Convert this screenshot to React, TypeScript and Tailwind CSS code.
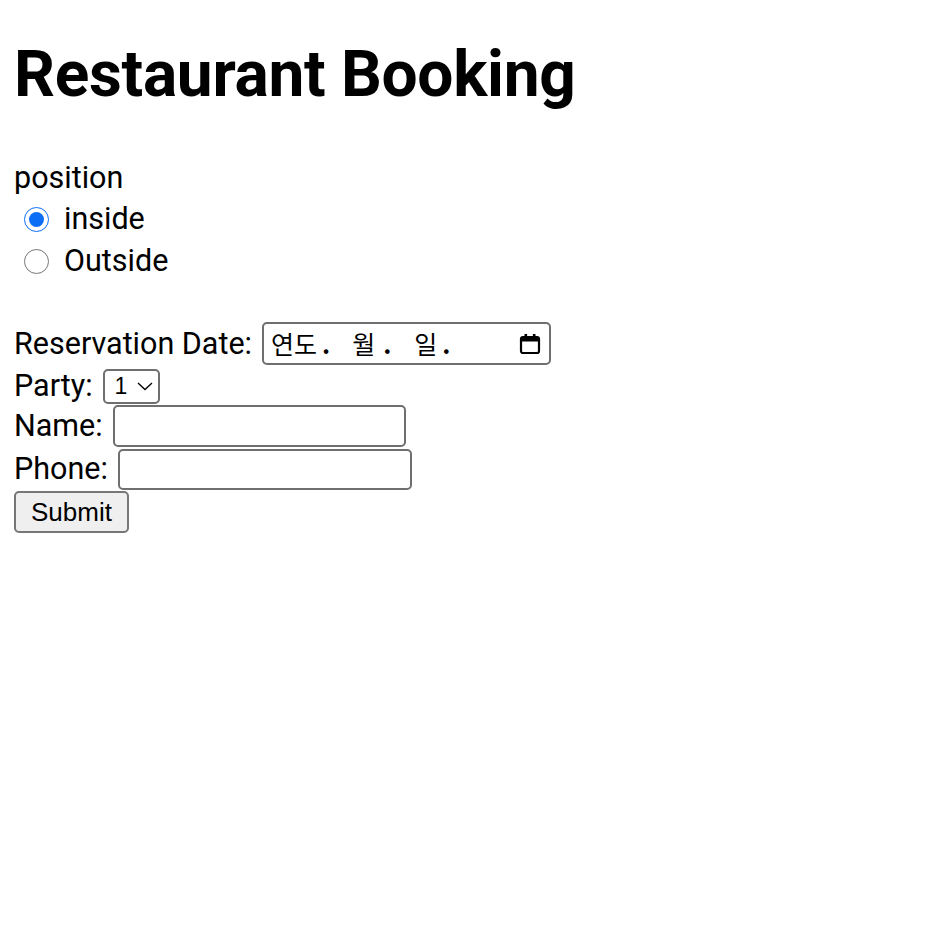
import React from 'react';

const CalendarIcon: React.FC = () => (
  <svg width="22" height="22" viewBox="0 0 22 22" fill="none" className="shrink-0">
    <rect x="2" y="4" width="18" height="16" rx="2" stroke="#000" strokeWidth="2.2" />
    <rect x="2" y="4" width="18" height="4.5" fill="#000" />
    <rect x="5.5" y="1" width="2.6" height="4" fill="#000" />
    <rect x="13.9" y="1" width="2.6" height="4" fill="#000" />
  </svg>
);

export default function App() {
  return (
    <div className="min-h-[934px] bg-white text-black px-[14px] pt-[40px] font-['Roboto','Noto_Sans_CJK_KR',sans-serif]">
      <h1 className="text-[64px] font-bold leading-[70px] tracking-[-0.3px]">Restaurant Booking</h1>

      <form className="flex flex-col mt-[48px] text-[30.5px] leading-[1.3]">
        <div className="h-[40px] leading-[40px]">position</div>
        <label className="flex items-center h-[42px]">
          <input
            type="radio"
            name="position"
            defaultChecked
            className="w-[25px] h-[25px] ml-[10px] mr-[15px] accent-[#0b6ef5]"
          />
          <span>inside</span>
        </label>
        <label className="flex items-center h-[42px]">
          <input
            type="radio"
            name="position"
            className="w-[25px] h-[25px] ml-[10px] mr-[15px] accent-[#0b6ef5]"
          />
          <span>Outside</span>
        </label>

        <div className="flex items-center gap-[10px] mt-[40px] h-[43px]">
          <span>Reservation Date:</span>
          <div className="flex items-center justify-between w-[289px] h-[43px] border-2 border-[#6f6f6f] rounded-[5px] pl-[7px] pr-[8px] text-[25px] leading-none font-['Noto_Sans_CJK_KR',sans-serif]">
            <div className="flex items-center">
              <span>연도</span>
              <span className="ml-[5px] font-bold">.</span>
              <span className="ml-[22px]">월</span>
              <span className="ml-[8px] font-bold">.</span>
              <span className="ml-[23px]">일</span>
              <span className="ml-[5px] font-bold">.</span>
            </div>
            <CalendarIcon />
          </div>
        </div>

        <div className="flex items-center gap-[10px] h-[40px] pt-[2px]">
          <span>Party:</span>
          <div className="flex items-center w-[57px] h-[35px] border-2 border-[#6f6f6f] rounded-[5px] pl-[10px] pr-[5px] text-[23px] leading-none font-['Liberation_Sans',sans-serif]">
            <span>1</span>
            <svg width="16" height="9" viewBox="0 0 16 9" className="ml-auto">
              <path d="M1 1l7 6.5 7-6.5" stroke="#000" strokeWidth="1.3" fill="none" />
            </svg>
          </div>
        </div>

        <div className="flex items-center gap-[10px] h-[42px]">
          <span>Name:</span>
          <input type="text" className="w-[293px] h-[42px] border-2 border-[#6f6f6f] rounded-[5px] px-[4px] outline-none" />
        </div>

        <div className="flex items-center gap-[10px] h-[42px] mt-[1px]">
          <span>Phone:</span>
          <input type="tel" className="w-[294px] h-[41px] border-2 border-[#6f6f6f] rounded-[5px] px-[4px] outline-none" />
        </div>

        <div className="mt-[1px]">
          <button
            type="button"
            className="h-[42px] px-[15px] bg-[#efefef] border-2 border-[#777] rounded-[5px] text-[26px] leading-none font-['Liberation_Sans',sans-serif]"
          >
            Submit
          </button>
        </div>
      </form>
    </div>
  );
}
